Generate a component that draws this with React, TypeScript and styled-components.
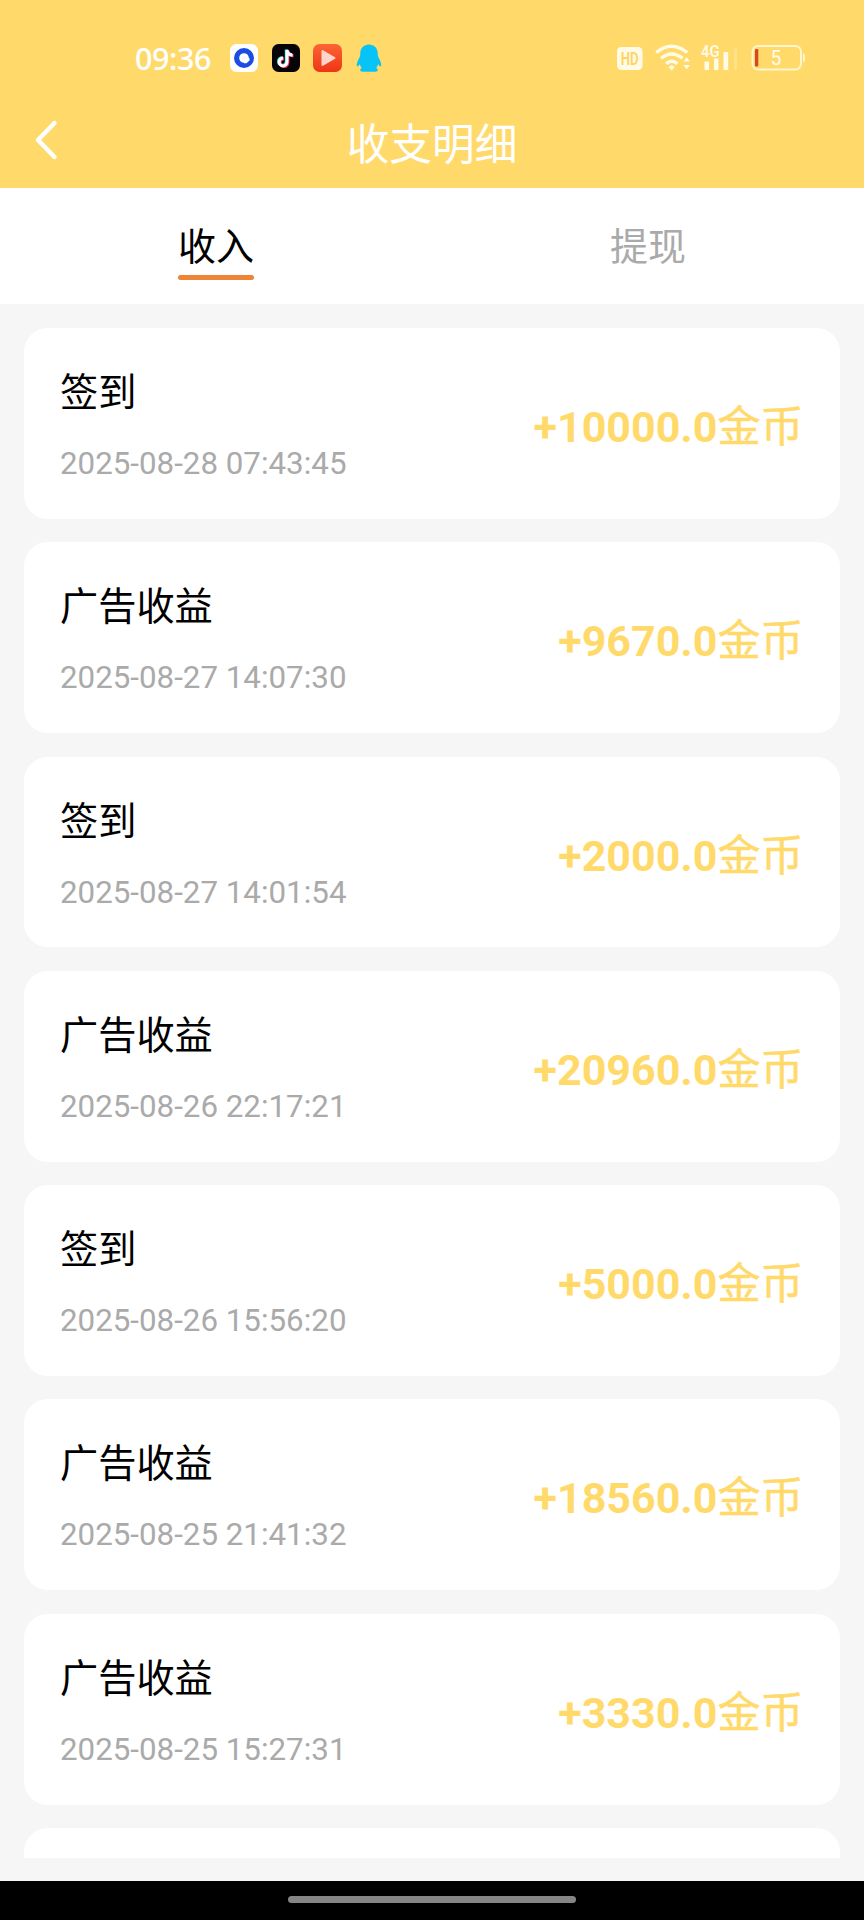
import React from "react";
import styled, { createGlobalStyle } from "styled-components";

const Global = createGlobalStyle`
  * { box-sizing: border-box; }
  body { margin: 0; background: #f6f6f6; }
`;

const Screen = styled.div`
  display: flex;
  flex-direction: column;
  width: 864px;
  height: 1920px;
  overflow: hidden;
  background: #f6f6f6;
  font-family: Roboto, "Noto Sans CJK SC", sans-serif;
`;

const Header = styled.header`
  flex: none;
  height: 188px;
  background: #ffda6b;
  color: #fff;
`;

const StatusBar = styled.div`
  display: flex;
  align-items: center;
  height: 92px;
  padding: 24px 58px 0 135px;
`;

const Clock = styled.time`
  width: 95px;
  font: 500 30.5px/36px "Noto Sans", sans-serif;
  letter-spacing: -0.4px;
  white-space: nowrap;
`;

const AppIcons = styled.div`
  display: flex;
  gap: 13.7px;
  height: 28px;
`;

const SystemIcons = styled.div`
  display: flex;
  align-items: center;
  margin-left: auto;
  height: 28px;
`;

const TitleBar = styled.div`
  display: grid;
  grid-template-columns: 96px 1fr 96px;
  align-items: center;
  height: 96px;
`;

const BackButton = styled.button`
  display: flex;
  padding: 0 0 0 32px;
  border: 0;
  background: none;
  color: inherit;
`;

const Title = styled.h1`
  margin: 0;
  padding-top: 9px;
  font-size: 42.7px;
  line-height: 60px;
  font-weight: 400;
  text-align: center;
`;

const Tabs = styled.nav`
  flex: none;
  display: grid;
  grid-template-columns: 1fr 1fr;
  height: 116px;
  background: #fff;
`;

const Tab = styled.div<{ $active?: boolean }>`
  display: flex;
  flex-direction: column;
  align-items: center;
  padding-top: 31px;
  font-size: 38px;
  line-height: 56px;
  color: ${(p) => (p.$active ? "#000" : "#aaa")};
  &::after {
    content: "";
    width: 76px;
    height: 5px;
    border-radius: 3px;
    background: ${(p) => (p.$active ? "#ee8437" : "transparent")};
  }
`;

const List = styled.main`
  display: flex;
  flex-direction: column;
  gap: 23.4px;
  height: 1554px;
  padding: 24px 24px 0;
  overflow: hidden;
`;

const Card = styled.article`
  flex: none;
  display: flex;
  align-items: center;
  justify-content: space-between;
  height: 190.9px;
  padding: 7px 36.5px 0 36px;
  border-radius: 24px;
  background: #fff;
`;

const Info = styled.div`
  display: flex;
  flex-direction: column;
  gap: 22px;
`;

const Name = styled.div`
  font-size: 38.2px;
  line-height: 52px;
  color: #000;
`;

const Time = styled.div`
  font-size: 31.3px;
  line-height: 46px;
  color: #aaa;
`;

const Amount = styled.div`
  font-size: 43px;
  line-height: 56px;
  font-weight: 700;
  color: #ffda6b;
`;

const Unit = styled.span`
  font-weight: 400;
  -webkit-text-stroke: 0.5px #ffda6b;
`;

const NavBar = styled.footer`
  display: flex;
  justify-content: center;
  height: 39px;
  margin-top: auto;
  padding-top: 15px;
  background: #000;
`;

const HomeIndicator = styled.div`
  width: 288px;
  height: 7px;
  border-radius: 4px;
  background: #858585;
`;

const records = [
  { name: "签到", time: "2025-08-28 07:43:45", amount: "10000.0" },
  { name: "广告收益", time: "2025-08-27 14:07:30", amount: "9670.0" },
  { name: "签到", time: "2025-08-27 14:01:54", amount: "2000.0" },
  { name: "广告收益", time: "2025-08-26 22:17:21", amount: "20960.0" },
  { name: "签到", time: "2025-08-26 15:56:20", amount: "5000.0" },
  { name: "广告收益", time: "2025-08-25 21:41:32", amount: "18560.0" },
  { name: "广告收益", time: "2025-08-25 15:27:31", amount: "3330.0" },
];

const BrowserIcon = () => (
  <svg width="28" height="28" viewBox="0 0 28 28">
    <rect width="28" height="28" rx="6.5" fill="#fff" />
    <circle cx="14" cy="14" r="7.4" fill="none" stroke="#1b4de4" strokeWidth="5.2" />
    <path d="M14 14h5.5v2.5l-3 2.8H14z" fill="#fff" />
  </svg>
);

const NotePath = "M15 6v12a3.9 3.9 0 1 1-3.9-3.9M15 6c.3 3.2 2.4 5 5.6 5.2";

const DouyinIcon = () => (
  <svg width="28" height="28" viewBox="0 0 28 28">
    <rect width="28" height="28" rx="6.5" fill="#060309" />
    <g fill="none" strokeWidth="3">
      <path d={NotePath} stroke="#39e4df" transform="translate(-.7 -.6)" />
      <path d={NotePath} stroke="#f62f5d" transform="translate(.9 .7)" />
      <path d={NotePath} stroke="#fff" />
    </g>
  </svg>
);

const VideoIcon = () => (
  <svg width="29" height="28" viewBox="0 0 29 28">
    <defs>
      <linearGradient id="video" x2="0" y2="1">
        <stop stopColor="#fa6534" />
        <stop offset="1" stopColor="#ef3515" />
      </linearGradient>
    </defs>
    <rect width="29" height="28" rx="6.5" fill="url(#video)" />
    <path d="M9.5 7v14l12-7z" fill="#ffd5cb" stroke="#ffd5cb" strokeWidth="2" strokeLinejoin="round" />
  </svg>
);

const PenguinIcon = () => (
  <svg width="26" height="28" viewBox="0 0 26 28">
    <path
      d="M13 .5c-5.200 0-8.700 3.700-8.700 9 0 2.300-.5 3.500-1.500 5.300C1.200 17.800.4 20.500.9 22c.4 1 2-.2 3-2 .3 1.600.9 3 2 4-2.500 1-2.300 3.700.8 3.700h12.600c3.100 0 3.300-2.700.8-3.700 1.100-1 1.700-2.400 2-4 1 1.800 2.600 3 3 2 .5-1.500-.3-4.200-1.900-7.200-1-1.800-1.500-3-1.500-5.300 0-5.300-3.500-9-8.700-9z"
      fill="#08c3f5"
    />
  </svg>
);

const SystemStatus = () => (
  <svg width="190" height="44" viewBox="616 36 190 44">
    <rect x="617" y="47" width="25.500" height="23" rx="4.500" fill="#fffbe6" />
    <text x="629.700" y="65" textAnchor="middle" textLength="18" lengthAdjust="spacingAndGlyphs" fontFamily="Roboto" fontSize="18" fontWeight="600" fill="#ffd362">HD</text>
    <g fill="none" stroke="#fffbe6" strokeWidth="3.400">
      <path d="M656.300 52.500q15-12.500 31 0M661 58.300q10.800-8.800 21.600 0M666 63.600q5.800-4.500 11.500 0" />
    </g>
    <path d="M668.500 67l3.200-2 3.200 2-3.200 3.500zM683.300 61.500l3.400-4.300 3.400 4.300zM683.300 65l3.400 4.300 3.400-4.300z" fill="#fffbe6" />
    <text x="701" y="57" textLength="18.500" lengthAdjust="spacingAndGlyphs" fontFamily="Roboto" fontSize="16.500" fontWeight="600" fill="#fffbe6">4G</text>
    <path d="M704.500 61.500h4.500v8.500h-4.500zM714 58.500h4.500V70H714zM723.500 52h4.700v18h-4.700z" fill="#fffbe6" />
    <path d="M734 48h3v22h-3z" fill="#ffe18a" />
    <rect x="752.500" y="46" width="48.500" height="23.500" rx="5.500" fill="none" stroke="#fff5ce" strokeWidth="2" />
    <path d="M803 53.500q2 0 2 2v4.500q0 2-2 2z" fill="#fff5ce" />
    <rect x="755" y="49" width="3.300" height="17.500" rx="1.200" fill="#d5471e" />
    <text x="776" y="65" textAnchor="middle" fontFamily="Roboto" fontSize="19.500" fill="#fffbe6">5</text>
  </svg>
);

export default function App() {
  return (
    <Screen>
      <Global />
      <Header>
        <StatusBar>
          <Clock>09:36</Clock>
          <AppIcons>
            <BrowserIcon />
            <DouyinIcon />
            <VideoIcon />
            <PenguinIcon />
          </AppIcons>
          <SystemIcons>
            <SystemStatus />
          </SystemIcons>
        </StatusBar>
        <TitleBar>
          <BackButton aria-label="返回">
            <svg width="26" height="42" viewBox="0 0 26 42">
              <path d="M22.500 4L6 21l16.500 17" fill="none" stroke="#fff" strokeWidth="4.400" strokeLinecap="round" strokeLinejoin="round" />
            </svg>
          </BackButton>
          <Title>收支明细</Title>
        </TitleBar>
      </Header>
      <Tabs>
        <Tab $active>收入</Tab>
        <Tab>提现</Tab>
      </Tabs>
      <List>
        {records.map((r) => (
          <Card key={r.time}>
            <Info>
              <Name>{r.name}</Name>
              <Time>{r.time}</Time>
            </Info>
            <Amount>
              +{r.amount}
              <Unit>金币</Unit>
            </Amount>
          </Card>
        ))}
        <Card />
      </List>
      <NavBar>
        <HomeIndicator />
      </NavBar>
    </Screen>
  );
}
